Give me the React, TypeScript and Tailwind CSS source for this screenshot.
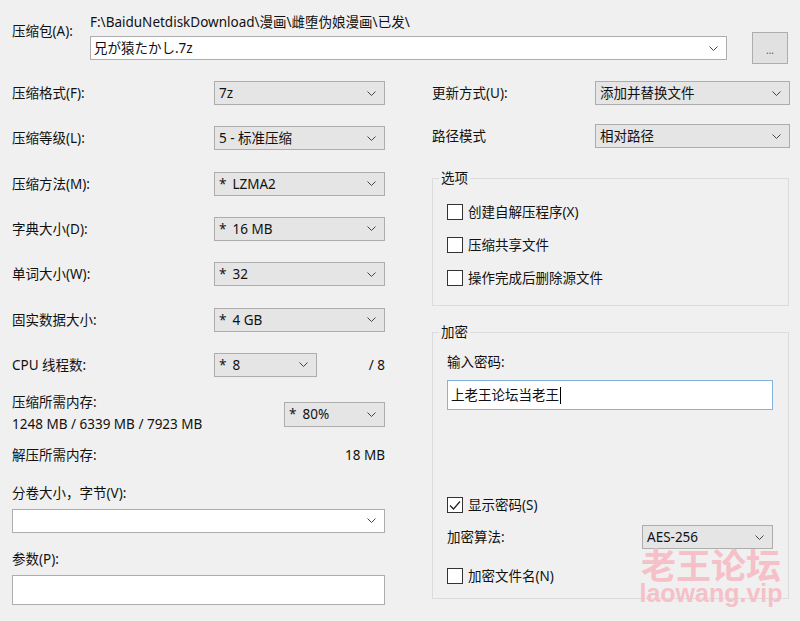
import React from 'react';

const Chevron: React.FC = () => (
  <svg width="9" height="5" viewBox="0 0 9 5" className="shrink-0">
    <polyline points="0.5,0.5 4.5,4.5 8.5,0.5" fill="none" stroke="#444" strokeWidth="1" />
  </svg>
);

const Select: React.FC<{ value: string; star?: boolean; className?: string; white?: boolean }> = ({
  value,
  star,
  className = '',
  white,
}) => (
  <div
    className={`flex items-center justify-between border border-[#adadad] pl-[4px] pr-[8px] ${
      white ? 'bg-white' : 'bg-[#e5e5e5]'
    } ${className}`}
  >
    <span className="flex items-center whitespace-nowrap">
      {star && <span className="mr-[6px]">*</span>}
      {value}
    </span>
    <Chevron />
  </div>
);

const Checkbox: React.FC<{ label: string; checked?: boolean }> = ({ label, checked }) => (
  <div className="flex h-[20px] items-center">
    <div className="flex h-[16px] w-[16px] items-center justify-center border border-[#333] bg-white">
      {checked && (
        <svg width="14" height="14" viewBox="0 0 14 14">
          <polyline points="2,7.5 5.5,11 12,3.5" fill="none" stroke="#222" strokeWidth="1.2" />
        </svg>
      )}
    </div>
    <span className="ml-[5px]">{label}</span>
  </div>
);

const rows: { label: string; value: string; star?: boolean }[] = [
  { label: '压缩格式(F):', value: '7z' },
  { label: '压缩等级(L):', value: '5 - 标准压缩' },
  { label: '压缩方法(M):', value: 'LZMA2', star: true },
  { label: '字典大小(D):', value: '16 MB', star: true },
  { label: '单词大小(W):', value: '32', star: true },
  { label: '固实数据大小:', value: '4 GB', star: true },
];

export default function App() {
  return (
    <div className="relative h-[621px] w-[800px] overflow-hidden bg-[#f0f0f0] font-['Noto_Sans','Noto_Sans_CJK_SC',sans-serif] text-[13.5px] text-[#111]">
      {/* archive path */}
      <div className="flex pl-[12px] pt-[12px]">
        <div className="w-[78px] pt-[9px] leading-[20px]">压缩包(A):</div>
        <div className="w-[637px]">
          <div className="h-[20px] leading-[20px] whitespace-nowrap">
            {'F:\\BaiduNetdiskDownload\\漫画\\雌堕伪娘漫画\\已发\\'}
          </div>
          <div className="mt-[4px] flex h-[24px] items-center justify-between border border-[#adadad] bg-white pl-[3px] pr-[8px]">
            <span>兄が猿たかし.7z</span>
            <Chevron />
          </div>
        </div>
        <div className="ml-[25px] mt-[20px] flex h-[32px] w-[36px] items-center justify-center border border-[#adadad] bg-[#e1e1e1] pt-[4px] text-[10px] text-[#555]">
          ...
        </div>
      </div>

      <div className="mt-[17px] flex pl-[12px]">
        {/* left column */}
        <div className="w-[373px]">
          <div className="flex flex-col gap-[21.33px]">
            {rows.map((r) => (
              <div key={r.label} className="flex h-[24px] items-center">
                <div className="w-[202px]">{r.label}</div>
                <Select value={r.value} star={r.star} className="h-[24px] w-[171px]" />
              </div>
            ))}
            <div className="flex h-[24px] items-center">
              <div className="w-[202px]">CPU 线程数:</div>
              <Select value="8" star className="h-[24px] w-[103px]" />
              <div className="flex-1 text-right">/ 8</div>
            </div>
          </div>

          <div className="mt-[14px] flex">
            <div className="w-[272px] leading-[22px]">
              <div>压缩所需内存:</div>
              <div>1248 MB / 6339 MB / 7923 MB</div>
            </div>
            <Select value="80%" star className="mt-[11px] h-[25px] w-[101px]" />
          </div>

          <div className="mt-[10px] flex leading-[20px]">
            <div className="flex-1">解压所需内存:</div>
            <div>18 MB</div>
          </div>

          <div className="mt-[18px] leading-[20px]">分卷大小，字节(V):</div>
          <Select value="" white className="mt-[6px] h-[24px] w-[373px]" />

          <div className="mt-[16px] leading-[20px]">参数(P):</div>
          <div className="mt-[6px] h-[30px] w-[373px] border border-[#adadad] bg-white" />
        </div>

        {/* right column */}
        <div className="ml-[47px] w-[358px]">
          <div className="flex h-[24px] items-center">
            <div className="w-[163px]">更新方式(U):</div>
            <Select value="添加并替换文件" className="h-[24px] w-[195px]" />
          </div>
          <div className="mt-[19px] flex h-[24px] items-center">
            <div className="w-[163px]">路径模式</div>
            <Select value="相对路径" className="h-[24px] w-[195px]" />
          </div>

          <fieldset className="mt-[20px] w-[357px] border border-[#dcdcdc] pb-[17px] pl-[14px]">
            <legend className="-ml-[8px] px-[2px] leading-[20px]">选项</legend>
            <div className="mt-[14px] flex flex-col gap-[13px]">
              <Checkbox label="创建自解压程序(X)" />
              <Checkbox label="压缩共享文件" />
              <Checkbox label="操作完成后删除源文件" />
            </div>
          </fieldset>

          <fieldset className="mt-[16px] w-[357px] border border-[#dcdcdc] pb-[12px] pl-[14px] pr-[15px]">
            <legend className="-ml-[8px] px-[2px] leading-[20px]">加密</legend>
            <div className="mt-[10px] leading-[20px]">输入密码:</div>
            <div className="mt-[8px] flex h-[30px] items-center border border-[#86b3dc] bg-white pl-[3px]">
              <span>上老王论坛当老王</span>
              <span className="ml-[1px] h-[17px] w-px bg-black" />
            </div>
            <div className="mt-[85px]">
              <Checkbox label="显示密码(S)" checked />
            </div>
            <div className="mt-[10px] flex h-[24px] items-center justify-between">
              <span>加密算法:</span>
              <Select value="AES-256" className="h-[24px] w-[131px]" />
            </div>
            <div className="mt-[17px]">
              <Checkbox label="加密文件名(N)" />
            </div>
          </fieldset>
        </div>
      </div>

      {/* watermark */}
      <div className="pointer-events-none absolute left-[636px] top-[547px] flex w-[150px] flex-col items-center text-[#f6c0c8]">
        <div className="font-['Noto_Sans_CJK_SC',sans-serif] text-[35px] font-bold leading-[34px]">老王论坛</div>
        <div className="font-['Liberation_Sans',sans-serif] text-[25px] font-bold leading-[25px]">laowang.vip</div>
      </div>
    </div>
  );
}
